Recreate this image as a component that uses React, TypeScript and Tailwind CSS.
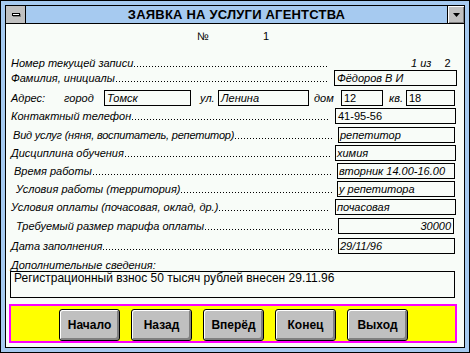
type Field = {
  label: string;
  value: string;
  labelClass: string;
  box: string;
  valueClass: string;
  row: string;
};

const fields: Field[] = [
  { label: 'Контактный телефон', value: '41-95-56', labelClass: 'pl-[5px]', box: 'w-[121px] mr-[8px]', valueClass: 'not-italic pl-[2px]', row: 'mb-[3px]' },
  { label: 'Вид услуг (няня, воспитатель, репетитор)', value: 'репетитор', labelClass: 'pl-[7px] tracking-[-0.2px]', box: 'w-[117px] mr-[9px]', valueClass: 'italic pl-[1px]', row: 'mb-[2px]' },
  { label: 'Дисциплина обучения', value: 'химия', labelClass: 'pl-[5px]', box: 'w-[121px] mr-[8px]', valueClass: 'italic pl-[1px]', row: 'mb-[2px]' },
  { label: 'Время работы', value: 'вторник 14.00-16.00', labelClass: 'pl-[8px]', box: 'w-[118px] mr-[9px]', valueClass: 'italic pl-[1px]', row: 'mb-[2px]' },
  { label: 'Условия работы (территория)', value: 'у репетитора', labelClass: 'pl-[10px]', box: 'w-[118px] mr-[9px]', valueClass: 'italic pl-[1px]', row: 'mb-[2px]' },
  { label: 'Условия оплаты (почасовая, оклад, др.)', value: 'почасовая', labelClass: 'pl-[5px]', box: 'w-[121px] mr-[8px]', valueClass: 'italic pl-[1px]', row: 'mb-[3px]' },
  { label: 'Требуемый размер тарифа оплаты', value: '30000', labelClass: 'pl-[10px]', box: 'w-[116px] mr-[10px]', valueClass: 'italic text-right pr-[2px]', row: 'mb-[4px]' },
  { label: 'Дата заполнения', value: '29/11/96', labelClass: 'pl-[5px]', box: 'w-[117px] mr-[9px]', valueClass: 'italic pl-[1px]', row: 'mb-[5px]' },
];

// dotted leader drawn as 1px dots every 3px on the baseline
function Leader({ top }: { top: string }) {
  return (
    <div
      className={`flex-1 self-start h-[1px] mr-[5px] ml-[1px] bg-[linear-gradient(to_right,#000_1px,transparent_1px)] bg-[length:3px_1px] ${top}`}
    />
  );
}

function FieldRow({ field }: { field: Field }) {
  return (
    <div className={`flex items-center h-[16px] ${field.row}`}>
      <span className={`whitespace-nowrap italic ${field.labelClass}`}>{field.label}</span>
      <Leader top="mt-[11px]" />
      <div className={`shrink-0 h-[16px] border border-black whitespace-nowrap ${field.box} ${field.valueClass}`}>
        {field.value}
      </div>
    </div>
  );
}

function Box({ className, children }: { className: string; children: string }) {
  return <div className={`shrink-0 h-[16px] border border-black pl-[2px] whitespace-nowrap ${className}`}>{children}</div>;
}

const buttons = ['Начало', 'Назад', 'Вперёд', 'Конец', 'Выход'];

export default function App() {
  return (
    <div className="w-[470px] h-[353px] border border-black bg-[#a6caf0] p-[4px] font-['Liberation_Sans',Arial,sans-serif] text-black">
      <div className="h-full border border-black bg-[#f8fcf8] flex flex-col text-[11px] leading-[14px]">
        {/* Title bar */}
        <div className="h-[18px] shrink-0 flex border-b border-black bg-[#a6caf0]">
          <div className="w-[20px] border-r border-black bg-[#c0c0c0] flex items-center justify-center">
            <div className="w-[8px] h-[3px] border border-black bg-white shadow-[1px_1px_0_#808080]" />
          </div>
          <div className="flex-1 text-center text-[13px] font-bold leading-[17px] tracking-[0.2px]">ЗАЯВКА НА УСЛУГИ АГЕНТСТВА</div>
          <div className="w-[17px] border-l border-black bg-[#c0c0c0] shadow-[inset_1px_1px_0_#fff,inset_-1px_-1px_0_#808080] flex items-center justify-center">
            <svg width="7" height="4" viewBox="0 0 7 4">
              <polygon points="0,0 7,0 3.5,4" fill="#000" />
            </svg>
          </div>
        </div>

        {/* Record number */}
        <div className="h-[32px] shrink-0 pt-[5px] pl-[191px] flex">
          <span className="w-[66px]">№</span>
          <span>1</span>
        </div>

        {/* Current record */}
        <div className="h-[14px] flex items-center">
          <span className="whitespace-nowrap italic pl-[5px]">Номер текущей записи</span>
          <Leader top="mt-[10px]" />
          <div className="shrink-0 w-[130px] flex pl-[77px]">
            <span className="italic">1 из</span>
            <span className="ml-[13px]">2</span>
          </div>
        </div>

        {/* Name */}
        <div className="flex items-center h-[16px] mb-[4px]">
          <span className="whitespace-nowrap italic pl-[5px]">Фамилия, инициалы</span>
          <Leader top="mt-[11px]" />
          <Box className="w-[123px] mr-[7px] italic">Фёдоров В И</Box>
        </div>

        {/* Address */}
        <div className="flex items-center h-[16px] mb-[2px] pl-[5px] italic whitespace-nowrap">
          <span className="shrink-0 w-[53px]">Адрес:</span>
          <span className="shrink-0 w-[40px]">город</span>
          <Box className="w-[87px]">Томск</Box>
          <span className="shrink-0 w-[27px] pl-[9px]">ул.</span>
          <Box className="w-[91px]">Ленина</Box>
          <span className="shrink-0 w-[32px] pl-[5px]">дом</span>
          <Box className="w-[42px] not-italic">12</Box>
          <span className="shrink-0 w-[23px] pl-[6px]">кв.</span>
          <Box className="w-[49px] not-italic">18</Box>
        </div>

        {fields.map((f) => (
          <FieldRow key={f.label} field={f} />
        ))}

        {/* Notes */}
        <div className="h-[12px] leading-[12px] pl-[5px] italic">Дополнительные сведения:</div>
        <div className="ml-[4px] w-[445px] h-[27px] border border-black pl-[3px] text-[12px] leading-[13px]">
          Регистрационный взнос 50 тысяч рублей внесен 29.11.96
        </div>

        {/* Navigation */}
        <div className="mt-[6px] ml-[3px] w-[448px] h-[39px] border-2 border-[#ff00ff] bg-[#ffff00] pt-[3px] pl-[48px] flex gap-[11px]">
          {buttons.map((b) => (
            <button
              key={b}
              className="w-[61px] h-[32px] border border-black rounded-[3px] bg-[#c0c0c0] shadow-[inset_1px_1px_0_#fff,inset_-2px_-2px_0_#808080] text-[12px] font-bold"
            >
              {b}
            </button>
          ))}
        </div>
      </div>
    </div>
  );
}
